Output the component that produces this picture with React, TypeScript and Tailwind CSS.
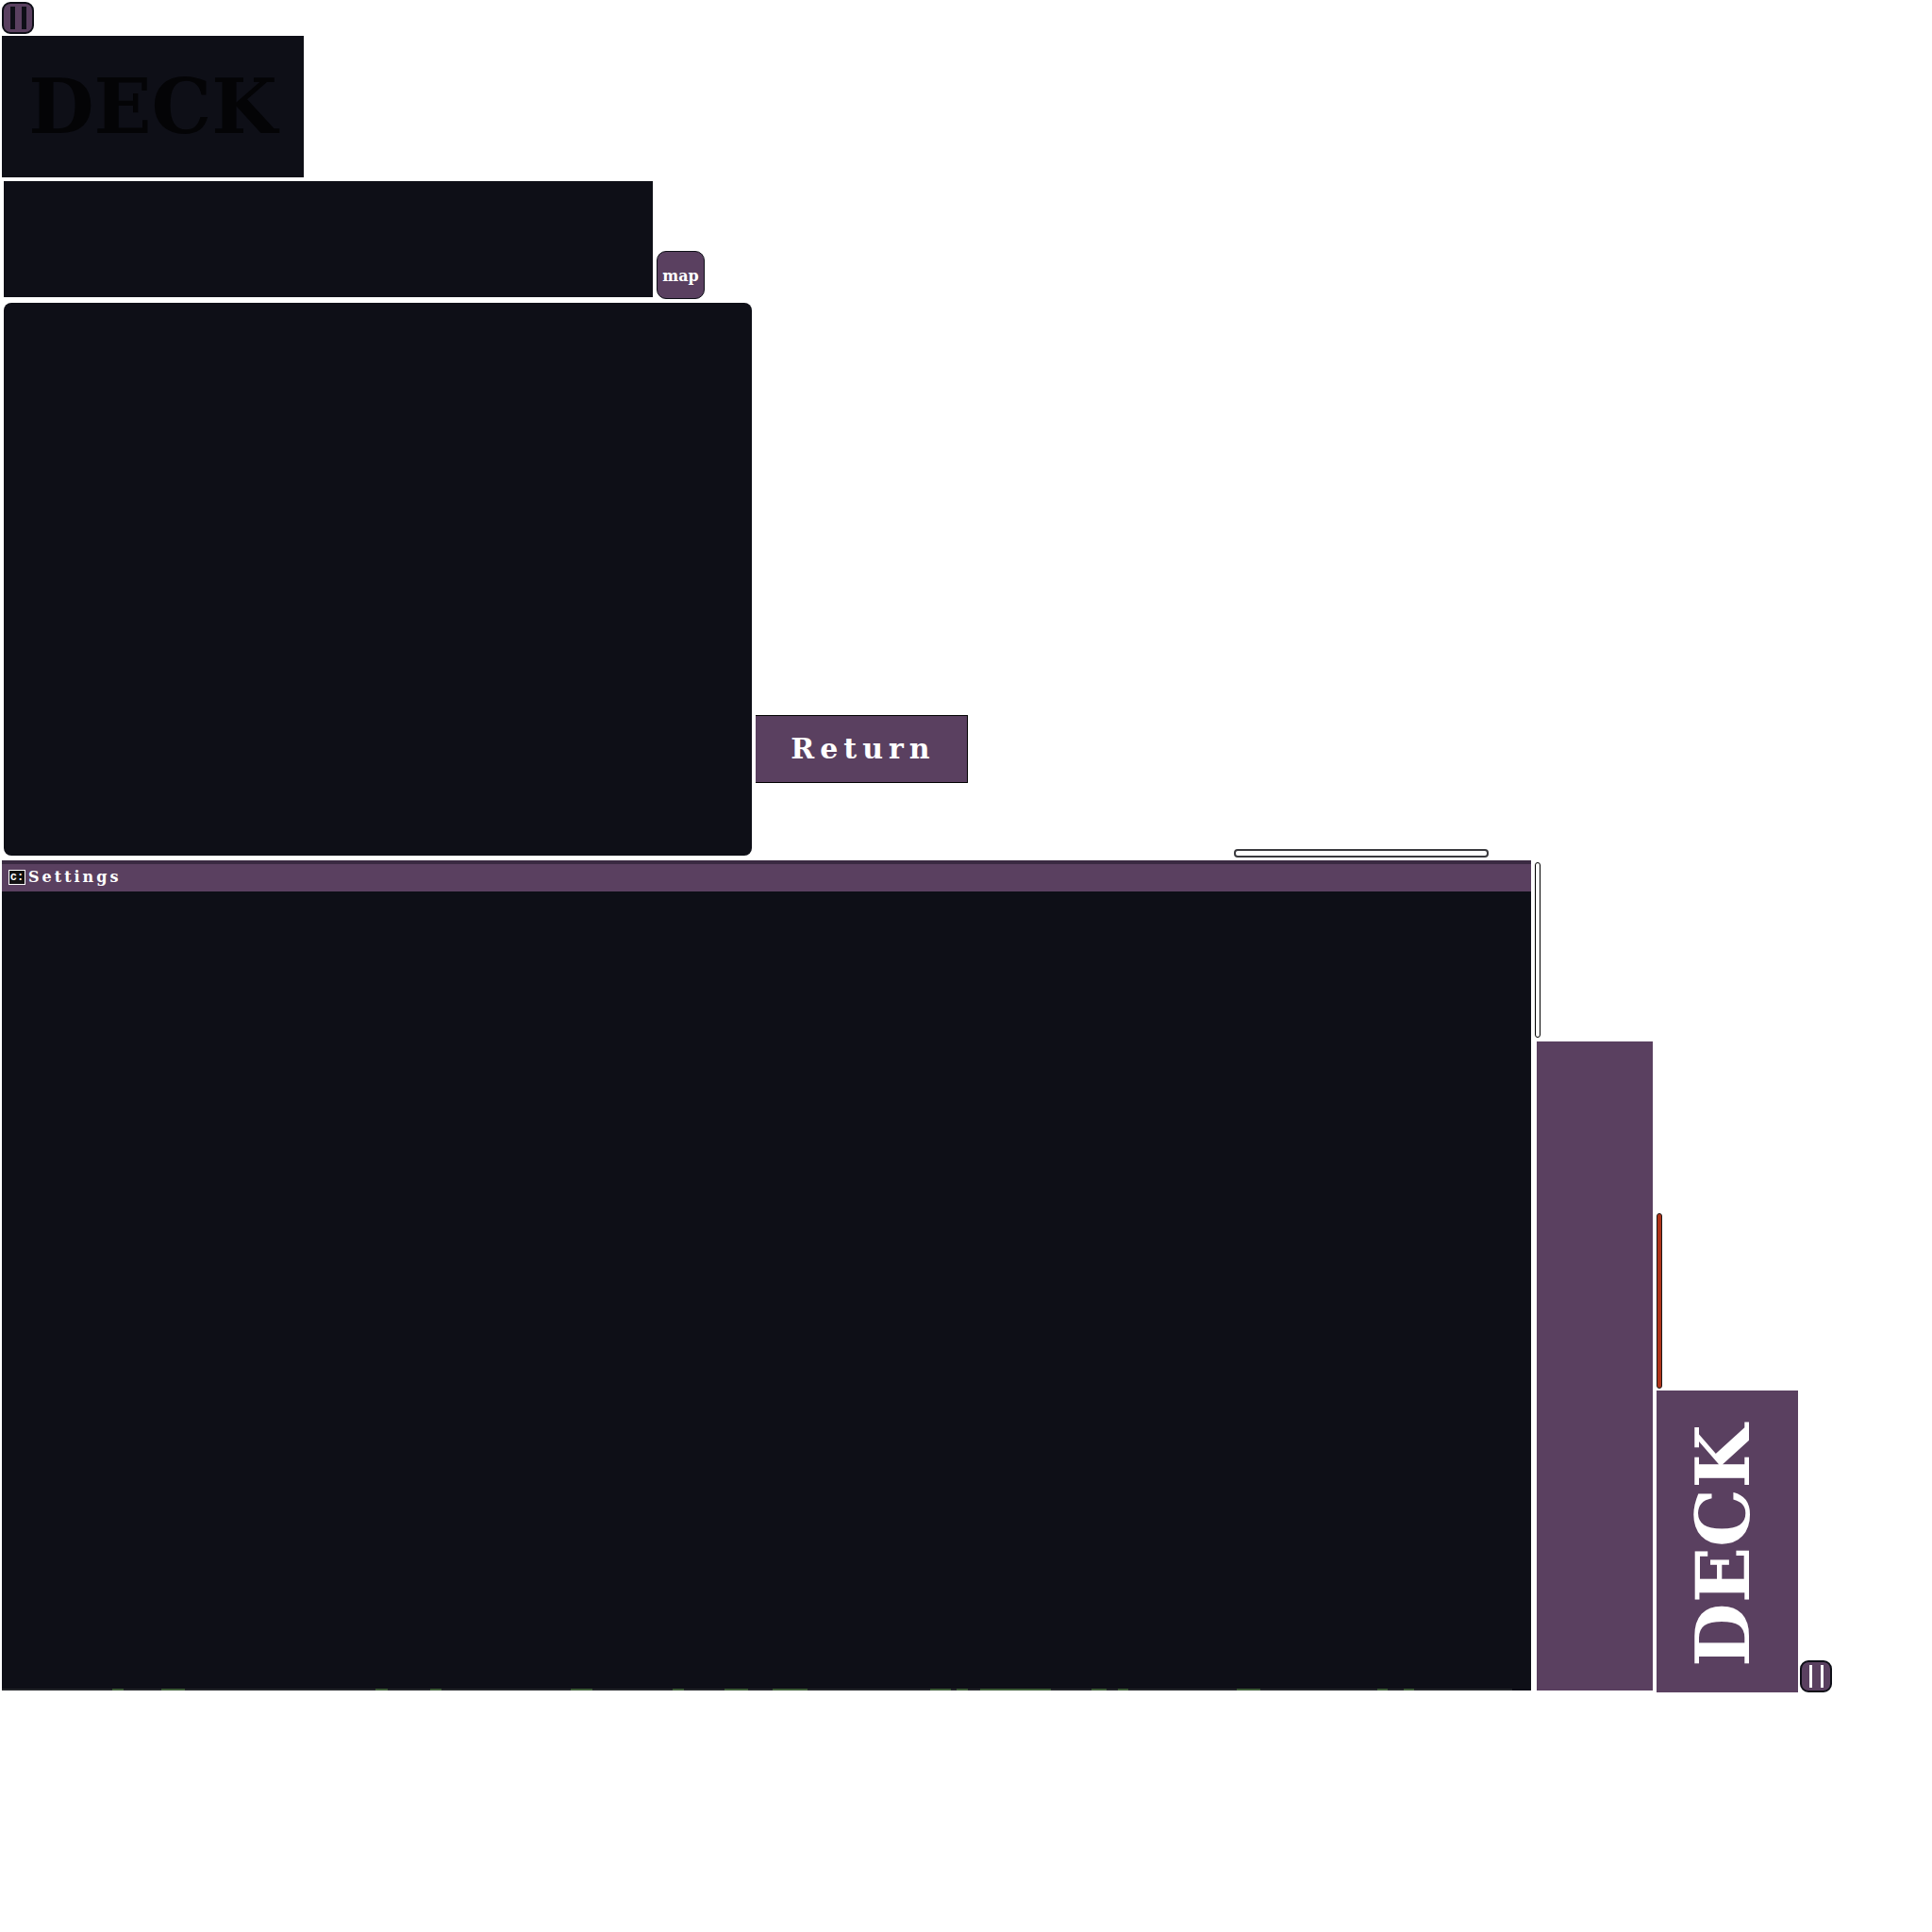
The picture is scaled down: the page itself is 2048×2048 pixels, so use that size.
const marks: [number, number][] = [
  [119, 12], [171, 25], [398, 13], [456, 12], [605, 23], [713, 12], [768, 25], [819, 37], [986, 22], [1014, 12],
  [1039, 75], [1157, 16], [1185, 11], [1311, 25], [1460, 11], [1488, 11],
];

const serif = "font-['DejaVu_Serif','Liberation_Serif',serif] font-bold";

function Pause({ children, gap }: { children: React.ReactNode; gap: string }) {
  return (
    <div className={`flex h-[34px] w-[34px] items-center justify-center rounded-[9px] border-2 border-[#0e0f17] bg-[#5a4060] ${gap}`}>
      {children}
    </div>
  );
}

export default function App() {
  return (
    <div className="flex min-h-[2048px] w-[2048px] flex-col items-start bg-white pl-[2px] pt-[2px]">
      <Pause gap="gap-[7px]">
        <div className="h-[24px] w-[5px] bg-[#0e0f17]" />
        <div className="h-[24px] w-[5px] bg-[#0e0f17]" />
      </Pause>

      <div className={`mt-[2px] flex h-[150px] w-[320px] items-center justify-center bg-[#0e0f17] text-[80px] leading-none text-[#040406] ${serif}`}>
        DECK
      </div>

      <div className="mt-[4px] flex h-[125px] items-end">
        <div className="ml-[2px] h-[123px] w-[688px] self-start bg-[#0e0f17]" />
        <div className={`ml-[4px] flex h-[51px] w-[51px] items-center justify-center rounded-[10px] border border-[#0e0f17] bg-[#5a4060] pt-[2px] text-[16px] leading-none text-white ${serif}`}>
          map
        </div>
      </div>

      <div className="mt-[4px] flex items-end">
        <div className="ml-[2px] h-[586px] w-[793px] rounded-[8px] bg-[#0e0f17]" />
        <div className={`mb-[77px] ml-[4px] flex h-[72px] w-[225px] items-center justify-center border-y border-r border-black bg-[#5a4060] pl-[4px] text-[30px] leading-none tracking-[6px] text-white ${serif}`}>
          Return
        </div>
      </div>

      <div className="relative mt-[5px] flex h-[882px] items-end">
        <div className="absolute left-[1306px] top-[-12px] h-[9px] w-[270px] rounded-[4px] border-2 border-[#3a3a3e] bg-white" />

        <div className="relative flex h-[880px] w-[1621px] flex-col self-start overflow-hidden bg-[#0e0f17]">
          <div className="h-[4px] bg-[#3a2a42]" />
          <div className="flex h-[29px] items-center gap-[3px] bg-[#5a4060] pb-[2px] pl-[7px]">
            <div className="flex h-[16px] w-[18px] items-center justify-center border border-white bg-[#111] font-['Liberation_Mono',monospace] text-[12px] font-bold leading-none text-white">
              c:
            </div>
            <span className={`text-[16px] leading-none tracking-[3px] text-white ${serif}`}>Settings</span>
          </div>
          <div className="absolute bottom-0 left-0 h-[2px] w-[1601px] bg-[#24262a]" />
          {marks.map(([left, width]) => (
            <div
              key={left}
              className="absolute bottom-0 h-[2px] bg-[#3f5c38]"
              style={{ left: left - 2, width }}
            />
          ))}
        </div>

        <div className="ml-[4px] flex flex-col items-start gap-[4px] self-start pt-[2px]">
          <div className="h-[186px] w-[6px] rounded-[3px] border border-black bg-white" />
          <div className="ml-[2px] h-[688px] w-[123px] bg-[#5a4060]" />
        </div>

        <div className="ml-[4px] flex flex-col items-start gap-[2px]">
          <div className="h-[186px] w-[6px] rounded-[3px] border border-[#1a1a1a] bg-[#b0341a]" />
          <div className={`flex h-[320px] w-[150px] items-center justify-center bg-[#5a4060] pr-[8px] pt-[8px] text-[78px] leading-none text-white ${serif}`}>
            <span className="rotate-180 [writing-mode:vertical-rl]">DECK</span>
          </div>
        </div>

        <div className="ml-[2px]">
          <Pause gap="gap-[9px]">
            <div className="h-[24px] w-[3px] bg-white" />
            <div className="h-[24px] w-[3px] bg-white" />
          </Pause>
        </div>
      </div>
    </div>
  );
}
